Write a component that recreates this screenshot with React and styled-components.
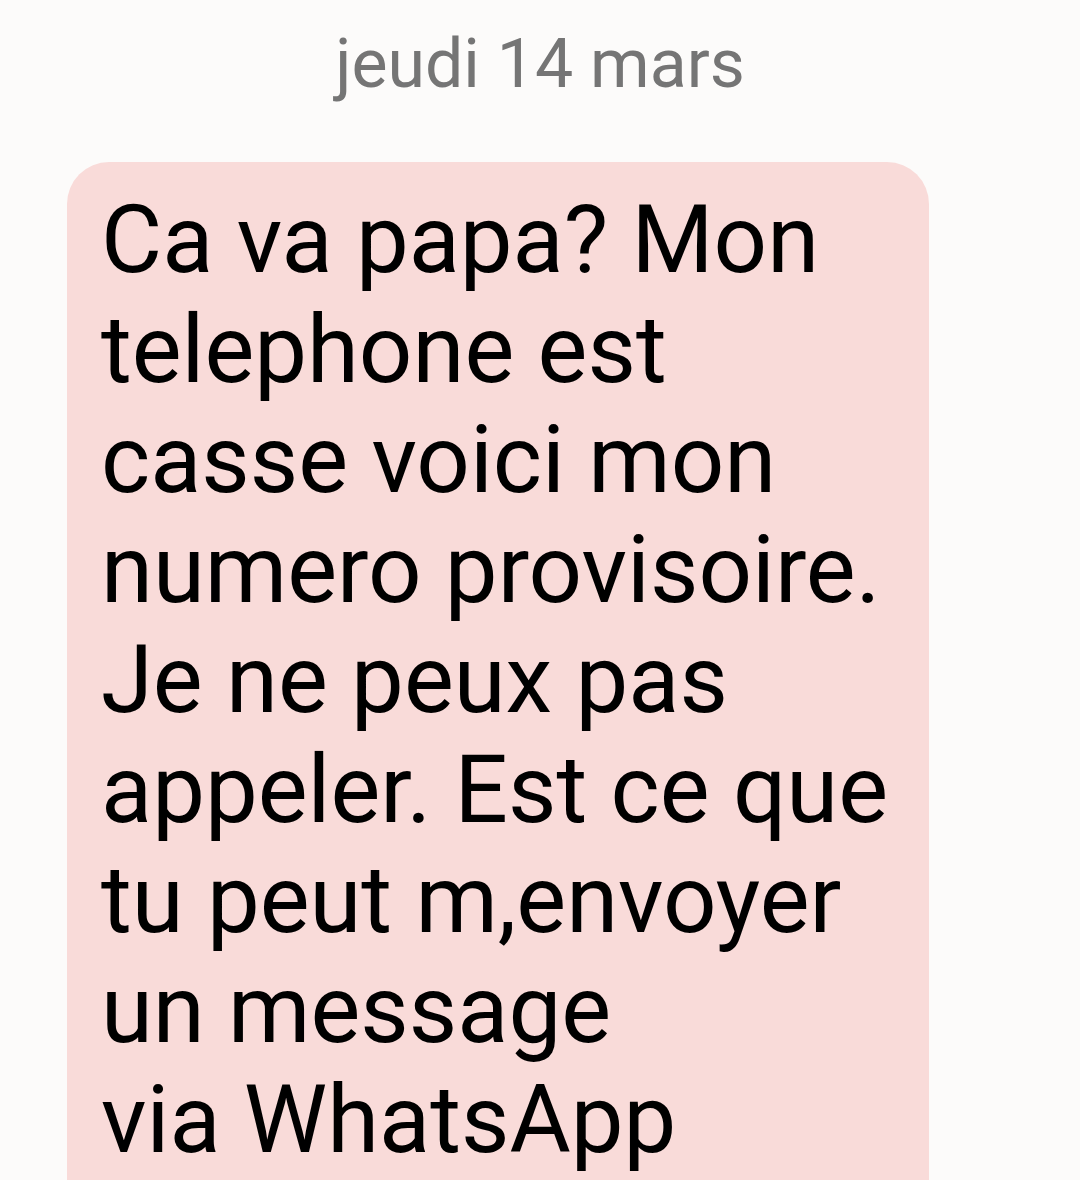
import React from 'react';
import styled, { createGlobalStyle } from 'styled-components';

const GlobalStyle = createGlobalStyle`
  html, body {
    margin: 0;
    padding: 0;
    background: #fcfbfa;
    overflow: hidden;
  }
  body {
    font-family: Roboto, "Noto Sans", sans-serif;
  }
`;

const Screen = styled.div`
  width: 1080px;
  height: 1180px;
  background: #fcfbfa;
  overflow: hidden;
`;

const DateLabel = styled.div`
  text-align: center;
  color: #757575;
  font-size: 68px;
  line-height: 74px;
  padding-top: 27px;
  margin-bottom: 61px;
`;

const Thread = styled.div`
  padding-left: 67px;
`;

const Bubble = styled.div`
  width: 862px;
  box-sizing: border-box;
  background: #f9dbd9;
  border-radius: 42px;
  padding: 23px 36px 60px 34px;
`;

const MessageText = styled.p`
  margin: 0;
  color: #000;
  font-size: 94px;
  line-height: 110px;
  white-space: pre-line;
`;

const message =
  "Ca va papa? Mon telephone est casse voici mon numero provisoire. Je ne peux pas appeler. Est ce que tu peut m,envoyer un message\nvia WhatsApp";

export default function App() {
  return (
    <Screen>
      <GlobalStyle />
      <DateLabel>jeudi 14 mars</DateLabel>
      <Thread>
        <Bubble>
          <MessageText>{message}</MessageText>
        </Bubble>
      </Thread>
    </Screen>
  );
}
